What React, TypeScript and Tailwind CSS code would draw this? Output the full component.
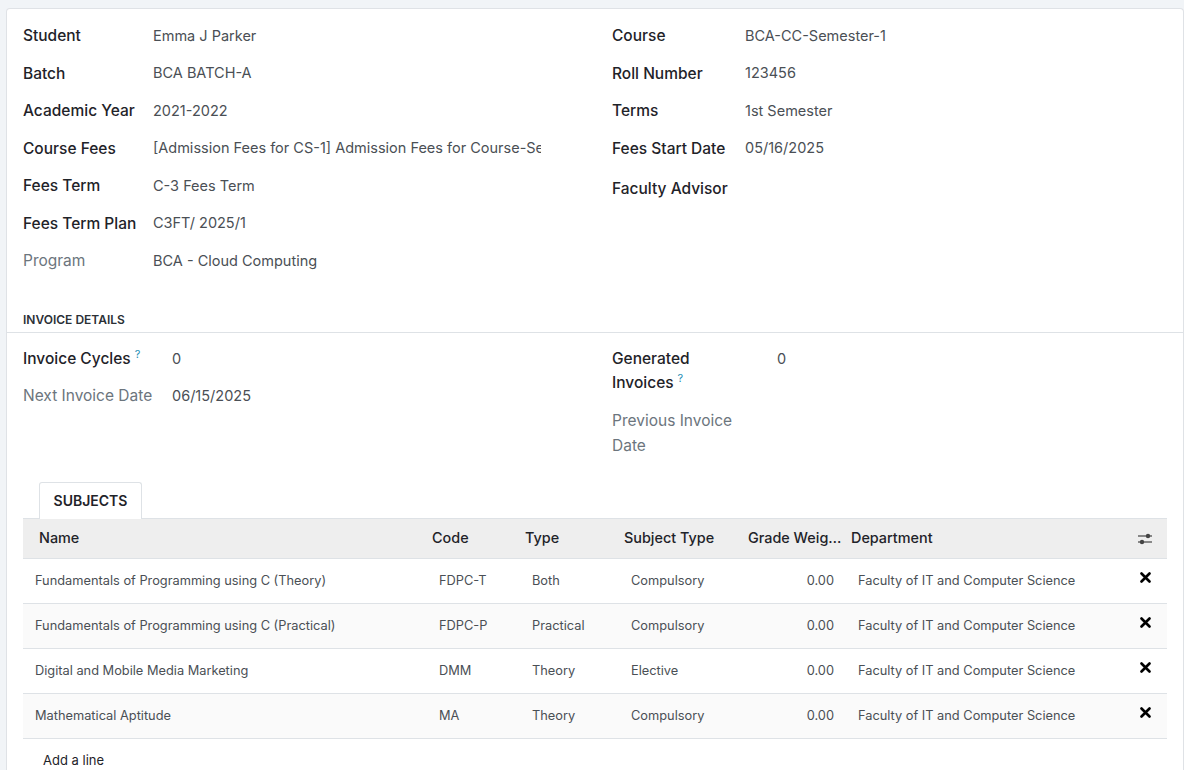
import { Fragment } from 'react';

const leftFields = [
  { label: 'Student', value: 'Emma J Parker' },
  { label: 'Batch', value: 'BCA BATCH-A' },
  { label: 'Academic Year', value: '2021-2022' },
  { label: 'Course Fees', value: '[Admission Fees for CS-1] Admission Fees for Course-Semester-1' },
  { label: 'Fees Term', value: 'C-3 Fees Term' },
  { label: 'Fees Term Plan', value: 'C3FT/ 2025/1' },
  { label: 'Program', value: 'BCA - Cloud Computing', muted: true },
];

const rightFields = [
  { label: 'Course', value: 'BCA-CC-Semester-1' },
  { label: 'Roll Number', value: '123456' },
  { label: 'Terms', value: '1st Semester' },
  { label: 'Fees Start Date', value: '05/16/2025' },
  { label: 'Faculty Advisor', value: '' },
];

const subjects = [
  { name: 'Fundamentals of Programming using C (Theory)', code: 'FDPC-T', type: 'Both', subjectType: 'Compulsory' },
  { name: 'Fundamentals of Programming using C (Practical)', code: 'FDPC-P', type: 'Practical', subjectType: 'Compulsory' },
  { name: 'Digital and Mobile Media Marketing', code: 'DMM', type: 'Theory', subjectType: 'Elective' },
  { name: 'Mathematical Aptitude', code: 'MA', type: 'Theory', subjectType: 'Compulsory' },
];

function Help() {
  return <sup className="ml-1 text-[11px] font-normal text-[#1f8fb5]">?</sup>;
}

function SlidersIcon() {
  return (
    <svg width="16" height="14" viewBox="0 0 16 14" className="text-[#444]">
      <line x1="1" y1="4" x2="15" y2="4" stroke="currentColor" strokeWidth="1.2" />
      <line x1="1" y1="10" x2="15" y2="10" stroke="currentColor" strokeWidth="1.2" />
      <circle cx="11" cy="4" r="2.2" fill="currentColor" />
      <circle cx="5" cy="10" r="2.2" fill="currentColor" />
    </svg>
  );
}

function TimesIcon() {
  return (
    <svg width="11" height="11" viewBox="0 0 11 11">
      <path d="M1.5 1.5 L9.5 9.5 M9.5 1.5 L1.5 9.5" stroke="#000" strokeWidth="2.6" strokeLinecap="round" />
    </svg>
  );
}

export default function App() {
  return (
    <div className="min-h-[770px] bg-[#f1f4f7] pl-[6px] pt-[8px] font-['Inter','Roboto',sans-serif]">
      <div className="min-h-[762px] rounded-tl-[4px] rounded-tr-[4px] border border-b-0 border-[#dfe2e6] bg-white">
        {/* Main fields */}
        <div className="grid grid-cols-[589px_1fr] px-4 pt-[8px]">
          <div>
            {leftFields.map((f) => (
              <div key={f.label} className="flex h-[37.5px] items-center">
                <div className={`w-[130px] shrink-0 text-[15.5px] ${f.muted ? 'text-[#6c757d]' : 'font-medium text-[#1f2329]'}`}>{f.label}</div>
                <div className="w-[388px] overflow-hidden whitespace-nowrap text-[14.5px] text-[#4a4f55]">{f.value}</div>
              </div>
            ))}
          </div>
          <div>
            {rightFields.map((f, i) => (
              <div key={f.label} className={`flex items-center ${i === 4 ? 'h-[41px] pt-[2px]' : 'h-[37.5px]'}`}>
                <div className="w-[133px] shrink-0 text-[15.5px] font-medium text-[#1f2329]">{f.label}</div>
                <div className="text-[14.5px] text-[#4a4f55]">{f.value}</div>
              </div>
            ))}
          </div>
        </div>

        {/* Invoice details */}
        <div className="mt-[31px] border-b border-[#dee2e6] px-4 pb-[3px]">
          <div className="text-[12px] font-semibold uppercase text-[#2b3036]">Invoice Details</div>
        </div>
        <div className="grid grid-cols-[589px_1fr] px-4 pt-[14px]">
          <div>
            <div className="flex h-[37px] items-start">
              <div className="w-[149px] shrink-0 text-[15.5px] font-medium leading-[24px] text-[#1f2329]">
                Invoice Cycles<Help />
              </div>
              <div className="text-[14.5px] leading-[24px] text-[#4a4f55]">0</div>
            </div>
            <div className="flex items-start">
              <div className="w-[149px] shrink-0 text-[15.5px] leading-[24px] text-[#6c757d]">Next Invoice Date</div>
              <div className="text-[14.5px] leading-[24px] text-[#4a4f55]">06/15/2025</div>
            </div>
          </div>
          <div>
            <div className="flex items-start">
              <div className="w-[165px] shrink-0 text-[15.5px] font-medium leading-[24px] text-[#1f2329]">
                Generated
                <br />
                Invoices<Help />
              </div>
              <div className="text-[14.5px] leading-[24px] text-[#4a4f55]">0</div>
            </div>
            <div className="mt-[13px] flex items-start">
              <div className="w-[165px] shrink-0 text-[15.5px] leading-[25px] text-[#6c757d]">
                Previous Invoice
                <br />
                Date
              </div>
            </div>
          </div>
        </div>

        {/* Subjects notebook */}
        <div className="px-4 pt-[24px]">
          <div className="flex pl-4">
            <div className="relative -mb-px flex h-[37px] w-[103px] items-center justify-center rounded-t-[3px] border border-b-0 border-[#dee2e6] bg-white text-[14px] font-semibold uppercase text-[#1f2329]">
              Subjects
            </div>
          </div>
          <table className="w-full table-fixed border-collapse text-[12.8px]">
            <colgroup>
              <col className="w-[401px]" />
              <col className="w-[93px]" />
              <col className="w-[99px]" />
              <col className="w-[124px]" />
              <col className="w-[103px]" />
              <col className="w-[287px]" />
              <col />
            </colgroup>
            <thead>
              <tr className="h-[40px] border-t border-b border-[#dee2e6] bg-[#eeeeee] text-left text-[14.4px] text-[#1f2329]">
                <th className="pl-4 font-medium">Name</th>
                <th className="pl-2 font-medium">Code</th>
                <th className="pl-2 font-medium">Type</th>
                <th className="pl-2 font-medium">Subject Type</th>
                <th className="whitespace-nowrap pl-2 font-medium">Grade Weig…</th>
                <th className="pl-2 font-medium">Department</th>
                <th className="pr-[14px] text-right">
                  <span className="inline-flex align-middle">
                    <SlidersIcon />
                  </span>
                </th>
              </tr>
            </thead>
            <tbody className="text-[#4a4f55]">
              {subjects.map((s, i) => (
                <Fragment key={s.code}>
                  <tr className={`h-[45px] border-b border-[#dee2e6] ${i % 2 === 1 ? 'bg-[#fafafa]' : 'bg-white'}`}>
                    <td className="pl-3">{s.name}</td>
                    <td className="pl-[15px]">{s.code}</td>
                    <td className="pl-[15px]">{s.type}</td>
                    <td className="pl-[15px]">{s.subjectType}</td>
                    <td className="pr-[9px] text-right">0.00</td>
                    <td className="pl-[15px]">Faculty of IT and Computer Science</td>
                    <td className="pr-[16px] text-right">
                      <span className="relative -top-[4px] inline-flex align-middle">
                        <TimesIcon />
                      </span>
                    </td>
                  </tr>
                </Fragment>
              ))}
            </tbody>
          </table>
          <div className="pl-5 pt-[12px] text-[13px] text-[#1f2329]">Add a line</div>
        </div>
      </div>
    </div>
  );
}
